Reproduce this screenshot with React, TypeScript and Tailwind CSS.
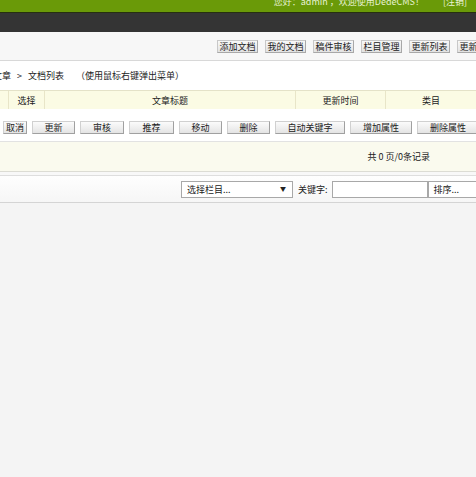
import React from "react";

const topBtns = ["添加文档", "我的文档", "稿件审核", "栏目管理", "更新列表", "更新主页"];

const bottomBtns: { t: string; w: string }[] = [
  { t: "取消", w: "w-[24px]" },
  { t: "更新", w: "w-[43px]" },
  { t: "审核", w: "w-[44px]" },
  { t: "推荐", w: "w-[45px]" },
  { t: "移动", w: "w-[43px]" },
  { t: "删除", w: "w-[43px]" },
  { t: "自动关键字", w: "w-[70px]" },
  { t: "增加属性", w: "w-[62px]" },
  { t: "删除属性", w: "w-[62px]" },
];

export default function App() {
  return (
    <div className="w-[476px] h-[477px] overflow-hidden bg-[#f4f4f4] font-['Noto_Sans_CJK_SC','Noto_Sans',sans-serif] text-[9px] text-[#333] leading-none">
      {/* top green bar */}
      <div className="h-[12px] bg-[#6a9a08] flex justify-end items-start overflow-hidden whitespace-nowrap">
        <div className="-mt-[4px] flex text-[#e8f2d4] text-[9px] leading-[12px]">
          <span>您好：admin ，欢迎使用DedeCMS！</span>
          <span className="ml-[19px] mr-[9px]">[注销]</span>
        </div>
      </div>
      <div className="h-[1px] bg-[#26300f]" />
      <div className="h-[19px] bg-[#343434]" />

      {/* toolbar */}
      <div className="h-[29px] bg-[#f7f7f7] border-b border-[#d8d8d8] flex items-center pl-[217px] gap-[7px] overflow-hidden whitespace-nowrap">
        {topBtns.map((b) => (
          <div
            key={b}
            className="shrink-0 w-[41px] h-[13px] flex items-center justify-center bg-gradient-to-b from-[#f8f8f8] to-[#e2e2e2] border border-[#c8c8c8] border-b-[#a8a8a8] border-r-[#a8a8a8] text-[9px] text-[#222]"
          >
            {b}
          </div>
        ))}
      </div>

      {/* breadcrumb */}
      <div className="h-[29px] bg-white flex items-center whitespace-nowrap overflow-hidden">
        <div className="-ml-[7px] flex items-center text-[9px] text-[#222]">
          <span>文章</span>
          <span className="mx-[6px]">&gt;</span>
          <span>文档列表</span>
          <span className="ml-[12px]">（使用鼠标右键弹出菜单）</span>
        </div>
      </div>

      {/* table header */}
      <div className="h-[19px] bg-[#fbfbe4] border-t border-[#e4e2c8] flex text-[9px] text-[#222] whitespace-nowrap">
        <div className="w-[9px] shrink-0 border-r border-[#e8e5c8]" />
        <div className="w-[36px] shrink-0 border-r border-[#e8e5c8] flex items-center justify-center">选择</div>
        <div className="w-[251px] shrink-0 border-r border-[#e8e5c8] flex items-center justify-center">文章标题</div>
        <div className="w-[90px] shrink-0 border-r border-[#e8e5c8] flex items-center justify-center">更新时间</div>
        <div className="w-[90px] shrink-0 flex items-center justify-center">类目</div>
      </div>

      {/* action buttons */}
      <div className="h-[33px] bg-white flex items-center pl-[3px] gap-[5px] pt-[4px] overflow-hidden whitespace-nowrap border-b border-[#e2e2e2]">
        {bottomBtns.map((b) => (
          <div
            key={b.t}
            className={`${b.w} shrink-0 h-[13px] flex items-center justify-center bg-gradient-to-b from-[#fbfbfb] to-[#e4e4e4] border border-[#d0d0d0] border-b-[#a0a0a0] border-r-[#a0a0a0] text-[9px] text-[#222]`}
          >
            {b.t}
          </div>
        ))}
      </div>

      {/* pager */}
      <div className="h-[29px] bg-[#fafaee] flex items-center justify-end pr-[46px] text-[9px] text-[#222] whitespace-nowrap">
        共 0 页/0条记录
      </div>
      <div className="h-[1px] bg-[#dcdcd4]" />
      <div className="h-[4px] bg-[#f8f8f8] border-b border-[#dedede]" />

      {/* search bar */}
      <div className="h-[27px] bg-gradient-to-b from-[#fefefe] to-[#f6f6f6] border-b border-[#d4d4d4] flex items-center pl-[181px] whitespace-nowrap overflow-hidden">
        <div className="shrink-0 w-[112px] h-[17px] bg-white border border-[#a8a8a8] flex items-center justify-between pl-[5px] pr-[6px] text-[9px] text-[#222]">
          <span>选择栏目...</span>
          <span className="text-[6px]">▼</span>
        </div>
        <span className="ml-[5px] text-[9px] text-[#222]">关键字:</span>
        <div className="shrink-0 ml-[4px] w-[96px] h-[17px] bg-white border border-[#a8a8a8]" />
        <div className="shrink-0 w-[60px] h-[17px] bg-white border border-[#a8a8a8] flex items-center pl-[5px] text-[9px] text-[#222]">
          排序...
        </div>
      </div>
    </div>
  );
}
